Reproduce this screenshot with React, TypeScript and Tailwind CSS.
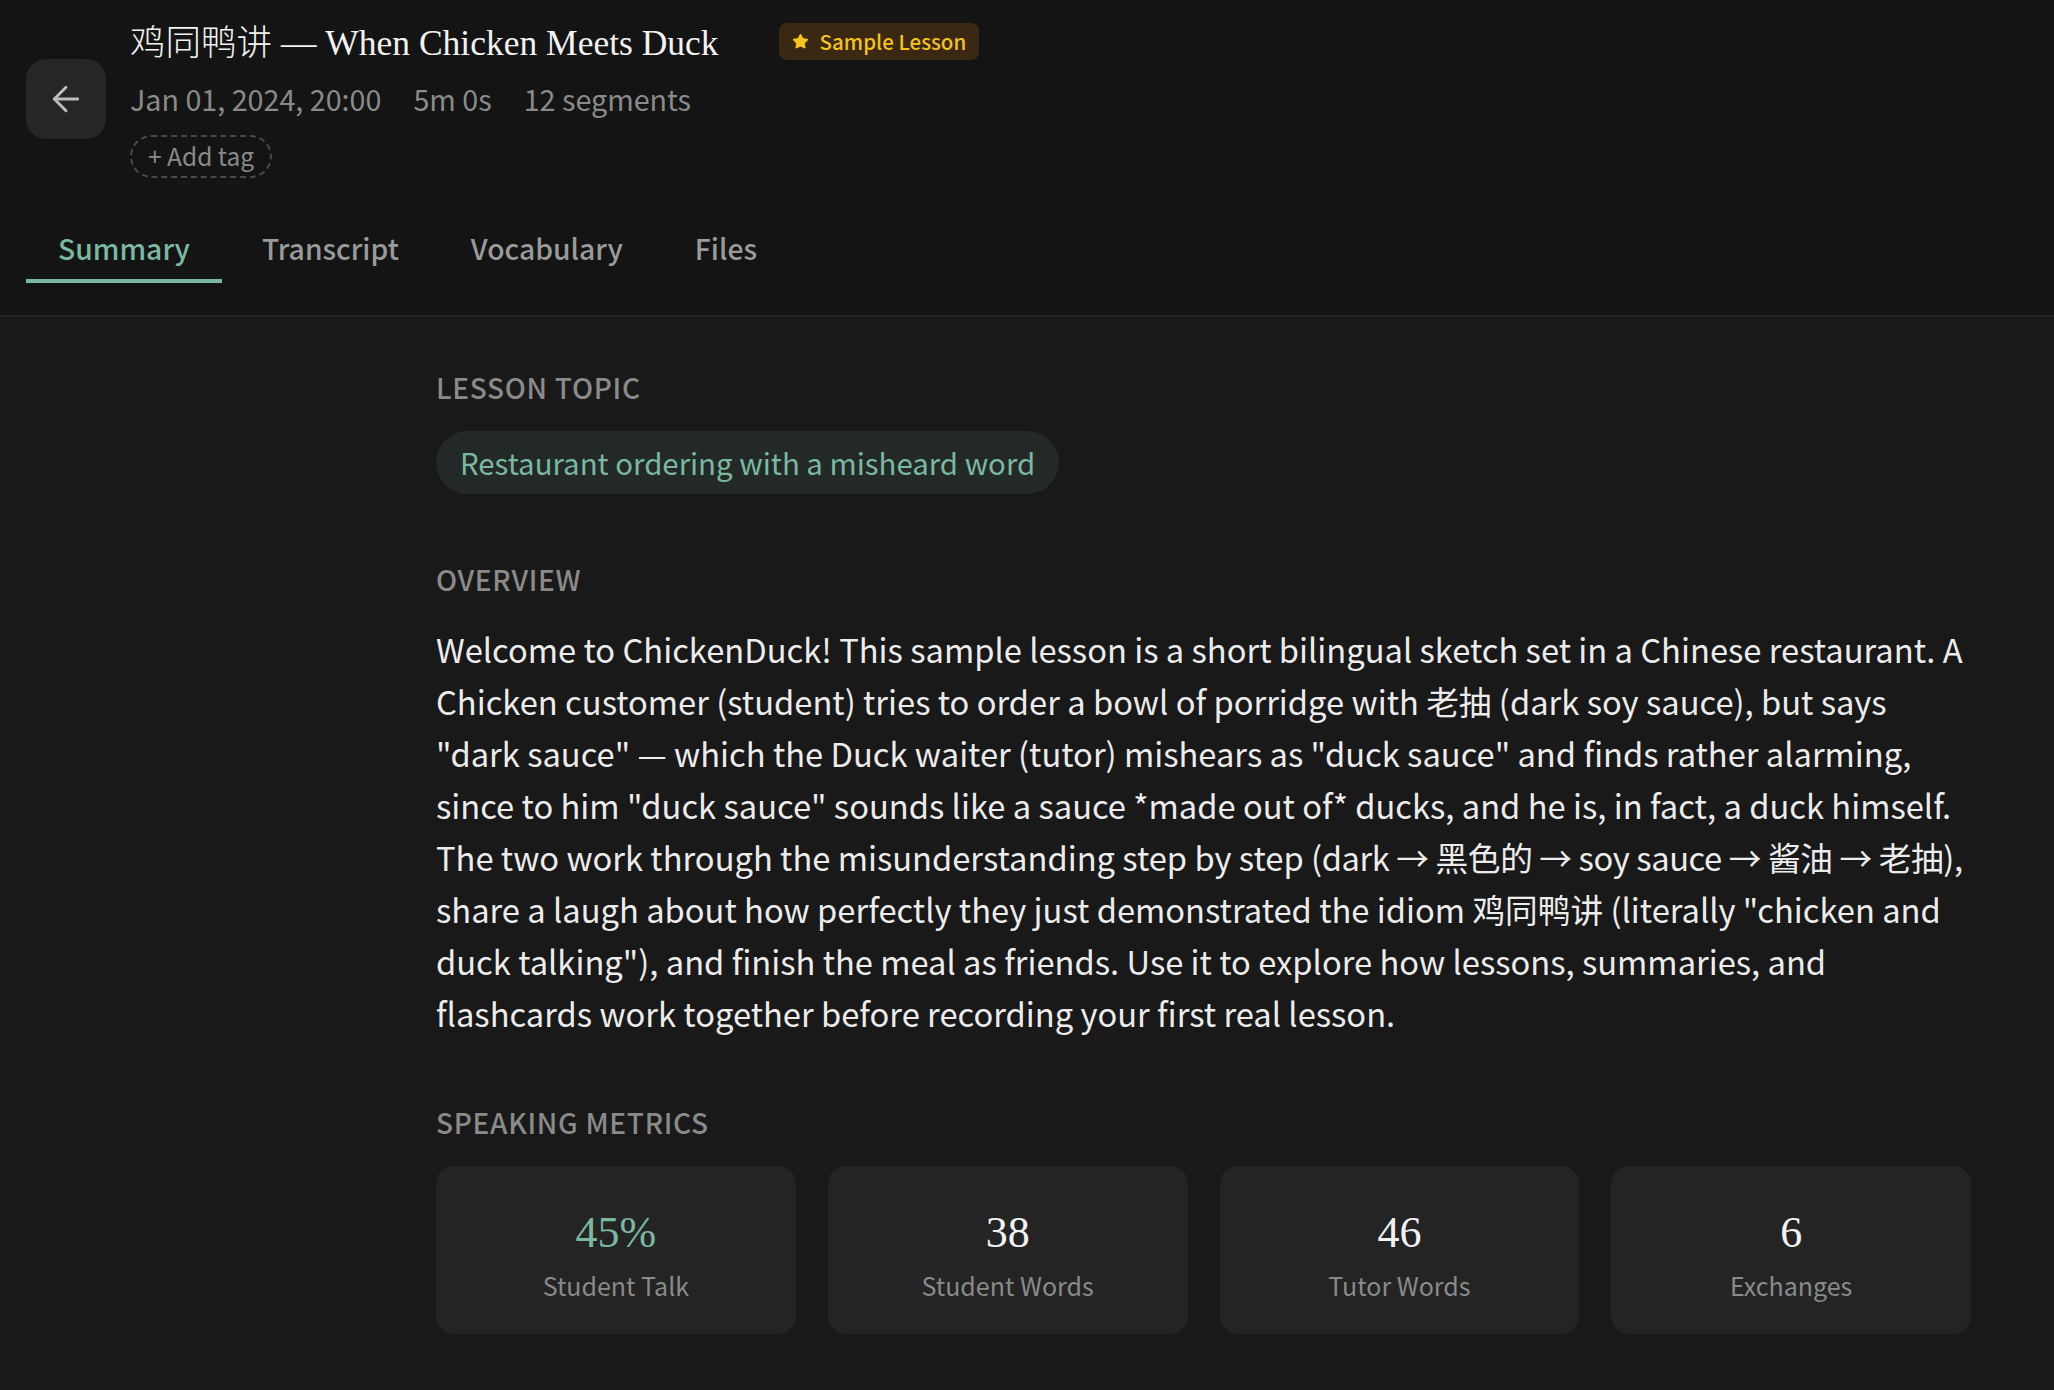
import { ArrowLeft, Star } from 'lucide-react'

const metrics = [
  { value: '45%', label: 'Student Talk', accent: true },
  { value: '38', label: 'Student Words' },
  { value: '46', label: 'Tutor Words' },
  { value: '6', label: 'Exchanges' },
]

const tabs = ['Summary', 'Transcript', 'Vocabulary', 'Files']

function SectionLabel({ children }: { children: string }) {
  return (
    <h3 className="text-[28px] leading-[40px] uppercase tracking-[0.025em] text-[#8a8a8a] font-medium mb-[24px]">
      {children}
    </h3>
  )
}

export default function App() {
  return (
    <div className="min-h-screen bg-[#191919] text-[#e8e8e8] font-['Noto_Sans_CJK_SC','Noto_Sans',sans-serif]">
      {/* header */}
      <header className="bg-[#141414] border-b-2 border-[#252525] pt-[19px] pb-[32px]">
        <div className="flex items-center gap-6 pl-[26px]">
          <button className="w-[80px] h-[80px] rounded-[20px] bg-[#262626] flex items-center justify-center text-[#bdbdbd]">
            <ArrowLeft size={40} strokeWidth={1.75} />
          </button>
          <div className="flex flex-col gap-4">
            <div className="flex items-center gap-[60px] h-[44px]">
              <h1 className="text-[35.5px] leading-[44px] text-[#f2f2f2] font-['Liberation_Serif','Noto_Sans_CJK_SC',serif]">
                <span className="font-light font-['Noto_Sans_CJK_SC',serif]">鸡同鸭讲</span> — When Chicken Meets Duck
              </h1>
              <span className="flex items-center gap-[11px] h-[37px] px-[13px] rounded-[8px] bg-[#3a2812] text-[#f6c21c] text-[20.5px] font-medium">
                <Star size={17} fill="currentColor" strokeWidth={1.5} />
                Sample Lesson
              </span>
            </div>
            <div className="flex items-center gap-8 text-[28.7px] leading-[40px] text-[#8a8a8a]">
              <span>Jan 01, 2024, 20:00</span>
              <span>5m 0s</span>
              <span>12 segments</span>
            </div>
            <div>
              <button className="h-[43px] px-[16px] rounded-full border-2 border-dashed border-[#4a4a4a] text-[24.5px] leading-none text-[#8a8a8a]">
                + Add tag
              </button>
            </div>
          </div>
        </div>

        <nav className="flex gap-2 pl-[26px] mt-[46px]">
          {tabs.map((t, i) => (
            <button
              key={t}
              className={`px-8 pb-[7px] text-[28.3px] leading-[48px] font-medium border-b-4 ${
                i === 0 ? 'text-[#7ab8a2] border-[#7ab8a2]' : 'text-[#9a9a9a] border-transparent'
              }`}
            >
              {t}
            </button>
          ))}
        </nav>
      </header>

      {/* summary content */}
      <main className="pl-[436px] pt-[50px] pb-[60px]">
        <div className="w-[1535px]">
          <section>
            <SectionLabel>Lesson Topic</SectionLabel>
            <span className="inline-flex items-center h-[63px] px-6 rounded-full bg-[#222927] text-[#7ab8a2] text-[29.4px]">
              Restaurant ordering with a misheard word
            </span>
          </section>

          <section className="mt-[65px]">
            <SectionLabel>Overview</SectionLabel>
            <p className="w-[1539px] text-[32.7px] leading-[52px] text-[#ececec]">
              Welcome to ChickenDuck! This sample lesson is a short bilingual sketch set in a Chinese restaurant. A
              Chicken customer (student) tries to order a bowl of porridge with 老抽 (dark soy sauce), but says "dark
              sauce" — which the Duck waiter (tutor) mishears as "duck sauce" and finds rather alarming, since to him
              "duck sauce" sounds like a sauce *made out of* ducks, and he is, in fact, a duck himself. The two work
              through the misunderstanding step by step{' '}
              <span className="tracking-[-0.4px]">(dark → 黑色的 → soy sauce → 酱油 → 老抽),</span> share a laugh about
              how perfectly they just demonstrated the idiom 鸡同鸭讲 (literally "chicken and duck talking"), and finish
              the meal as friends. Use it to explore how lessons, summaries, and flashcards work together before
              recording your first real lesson.
            </p>
          </section>

          <section className="mt-[63px]">
            <SectionLabel>Speaking Metrics</SectionLabel>
            <div className="grid grid-cols-4 gap-8">
              {metrics.map((m) => (
                <div
                  key={m.label}
                  className="h-[168px] pt-[8px] rounded-[18px] bg-[#242424] flex flex-col items-center justify-center"
                >
                  <div
                    className={`text-[44px] leading-[60px] font-['Liberation_Serif',serif] ${
                      m.accent ? 'text-[#7ab8a2]' : 'text-[#f2f2f2]'
                    }`}
                  >
                    {m.value}
                  </div>
                  <div className="mt-[2px] text-[25px] leading-[40px] text-[#8a8a8a]">{m.label}</div>
                </div>
              ))}
            </div>
          </section>
        </div>
      </main>
    </div>
  )
}
